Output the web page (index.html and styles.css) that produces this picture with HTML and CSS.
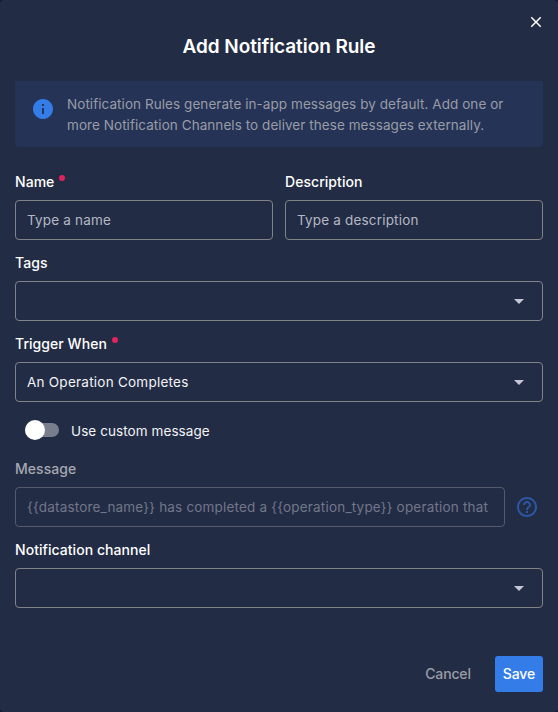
FILE: index.html
```html
<!DOCTYPE html>
<html lang="en">
<head>
<meta charset="utf-8">
<title>Add Notification Rule</title>
<link rel="stylesheet" href="styles.css">
</head>
<body>
<div class="dialog" role="dialog" aria-labelledby="dialog-title">
  <button class="close" type="button" aria-label="Close">
    <svg viewBox="0 0 24 24" width="18" height="18" fill="currentColor"><path d="M19 6.41 17.59 5 12 10.59 6.41 5 5 6.41 10.59 12 5 17.59 6.41 19 12 13.41 17.59 19 19 17.59 13.41 12z"/></svg>
  </button>
  <h1 class="title" id="dialog-title">Add Notification Rule</h1>
  <div class="info">
    <svg class="info-icon" viewBox="0 0 24 24" width="24" height="24" fill="currentColor"><path d="M12 2C6.48 2 2 6.48 2 12s4.48 10 10 10 10-4.48 10-10S17.52 2 12 2zm1 15h-2v-6h2v6zm0-8h-2V7h2v2z"/></svg>
    <p class="info-text">Notification Rules generate in-app messages by default. Add one or<br>more Notification Channels to deliver these messages externally.</p>
  </div>
  <div class="form">
    <div class="columns">
      <div class="field">
        <div class="label"><span class="label-text">Name</span><span class="required"></span></div>
        <div class="control placeholder">Type a name</div>
      </div>
      <div class="field">
        <div class="label"><span class="label-text">Description</span></div>
        <div class="control placeholder">Type a description</div>
      </div>
    </div>
    <div class="field">
      <div class="label"><span class="label-text">Tags</span></div>
      <div class="control select"><span></span><svg class="arrow" viewBox="0 0 24 24" width="24" height="24"><path d="m7 10 5 5 5-5z"/></svg></div>
    </div>
    <div class="field">
      <div class="label"><span class="label-text">Trigger When</span><span class="required"></span></div>
      <div class="control select"><span class="value">An Operation Completes</span><svg class="arrow" viewBox="0 0 24 24" width="24" height="24"><path d="m7 10 5 5 5-5z"/></svg></div>
    </div>
    <div class="toggle-row">
      <span class="toggle"><span class="knob"></span></span>
      <span class="toggle-label">Use custom message</span>
    </div>
    <div class="field disabled">
      <div class="label"><span class="label-text">Message</span></div>
      <div class="message-row">
        <div class="control message"><span class="message-text">{{datastore_name}} has completed a {{operation_type}} operation that</span></div>
        <svg class="help" viewBox="0 0 24 24" width="24" height="24" fill="currentColor"><path d="M11 18h2v-2h-2v2zm1-16C6.48 2 2 6.48 2 12s4.48 10 10 10 10-4.48 10-10S17.52 2 12 2zm0 18c-4.41 0-8-3.59-8-8s3.59-8 8-8 8 3.59 8 8-3.59 8-8 8zm0-14c-2.21 0-4 1.79-4 4h2c0-1.1.9-2 2-2s2 .9 2 2c0 2-3 1.75-3 5h2c0-2.25 3-2.5 3-5 0-2.21-1.79-4-4-4z"/></svg>
      </div>
    </div>
    <div class="field">
      <div class="label"><span class="label-text">Notification channel</span></div>
      <div class="control select"><span></span><svg class="arrow" viewBox="0 0 24 24" width="24" height="24"><path d="m7 10 5 5 5-5z"/></svg></div>
    </div>
  </div>
  <div class="actions">
    <button class="button cancel" type="button">Cancel</button>
    <button class="button save" type="button">Save</button>
  </div>
</div>
</body>
</html>
```
FILE: styles.css
```css
* {
  box-sizing: border-box;
}

body {
  margin: 0;
  background: #151b2b;
  font-family: Inter, "Liberation Sans", sans-serif;
  font-size: 13.5px;
  line-height: 21px;
  letter-spacing: 0.18px;
  color: #f2f3f6;
}

.dialog {
  position: relative;
  display: flex;
  flex-direction: column;
  height: 712px;
  padding: 33px 15px 20px;
  border-radius: 4px;
  background: #232c45;
}

button {
  margin: 0;
  border: 0;
  background: none;
  font: inherit;
}

.close {
  position: absolute;
  top: 12.5px;
  right: 13px;
  display: flex;
  padding: 0;
  color: #fff;
}

.title {
  margin: 0;
  font-size: 19px;
  font-weight: 600;
  line-height: 27px;
  letter-spacing: -0.07px;
  text-align: center;
  color: #fff;
}

.info {
  display: flex;
  gap: 12px;
  height: 66px;
  margin-top: 21px;
  padding: 13px 16px 11px;
  border-radius: 0 0 4px 4px;
  background: #253357;
}

.info-icon {
  flex: none;
  margin-top: 3px;
  color: #347de8;
}

.info-text {
  margin: 0;
  white-space: nowrap;
  letter-spacing: 0.06px;
  color: #999ca5;
}

.form {
  display: flex;
  flex-direction: column;
  gap: 12px;
  margin-top: 24px;
}

.columns {
  display: grid;
  grid-template-columns: 1fr 1fr;
  gap: 12px;
}

.label {
  display: flex;
  gap: 5px;
  margin-bottom: 8px;
  font-size: 14px;
  font-weight: 500;
  letter-spacing: 0.05px;
  color: #fff;
}

.required {
  width: 6px;
  height: 6px;
  margin-top: 4px;
  border-radius: 50%;
  background: #e0245e;
}

.control {
  display: flex;
  align-items: center;
  height: 40px;
  padding: 1px 11px 0;
  border: 1px solid #808388;
  border-radius: 4px;
  white-space: nowrap;
}

.placeholder {
  color: #b4b8c4;
}

.select {
  justify-content: space-between;
}

.value {
  letter-spacing: 0.24px;
}

.arrow {
  margin-bottom: 1px;
  fill: #c5c8d4;
}

.toggle-row {
  display: flex;
  align-items: center;
  gap: 12px;
  height: 32px;
  padding-left: 10px;
}

.toggle {
  display: flex;
  align-items: center;
  width: 34px;
  height: 14px;
  border-radius: 7px;
  background: #787e8e;
}

.knob {
  flex: none;
  width: 20px;
  height: 20px;
  border-radius: 50%;
  background: #fff;
}

.toggle-label {
  padding-top: 2px;
  letter-spacing: 0.08px;
}

.disabled .label {
  color: #a4a8b2;
}

.message-row {
  display: flex;
  align-items: center;
  gap: 10px;
}

.message {
  width: 490px;
  border-color: #555b6b;
  letter-spacing: 0.19px;
  color: #71778a;
}

.help {
  color: #2c57a3;
}

.actions {
  display: flex;
  justify-content: flex-end;
  gap: 16px;
  margin-top: auto;
}

.button {
  height: 36px;
  padding: 0 8px 1px;
  border-radius: 3px;
  font-size: 14px;
  font-weight: 500;
  letter-spacing: -0.15px;
}

.cancel {
  color: #999ca5;
}

.save {
  background: #347de8;
  color: #fff;
}
```
